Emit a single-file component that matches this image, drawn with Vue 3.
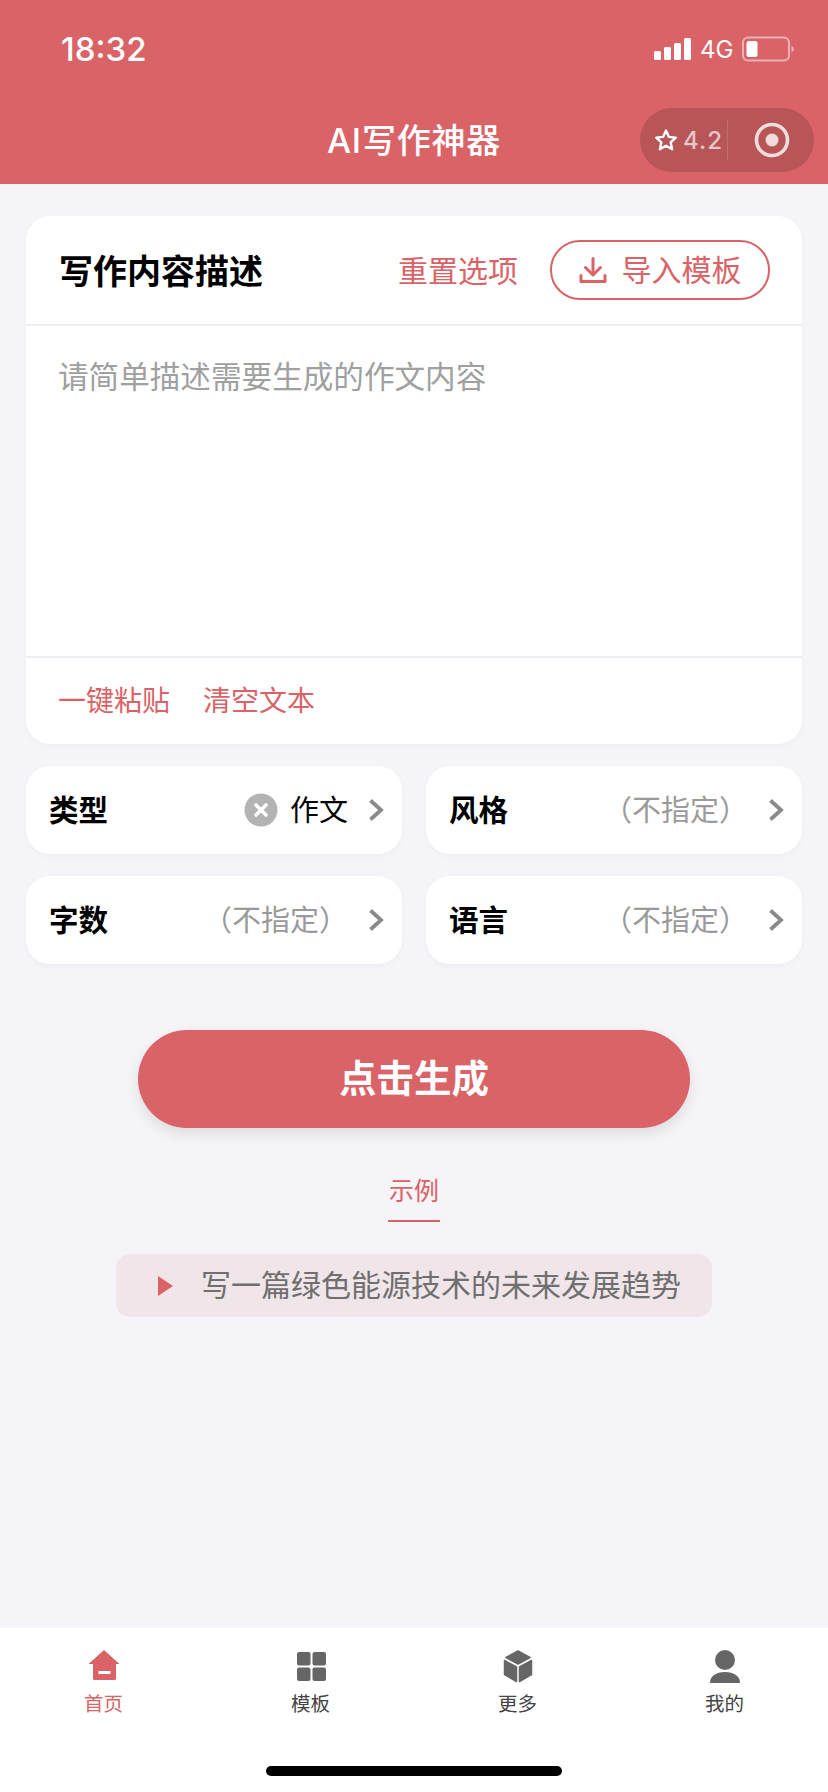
<template>
  <div class="page">
    <!-- Status bar and nav -->
    <header class="top">
      <div class="status">
        <span class="time">18:32</span>
        <div class="status-right">
          <svg class="signal" width="37" height="24" viewBox="0 0 37 24">
            <rect x="0" y="14" width="7" height="9" rx="1.5" />
            <rect x="10" y="10" width="7" height="13" rx="1.5" />
            <rect x="20" y="6" width="7" height="17" rx="1.5" />
            <rect x="30" y="1" width="7" height="22" rx="1.5" />
          </svg>
          <span class="net">4G</span>
          <svg class="battery" width="52" height="26" viewBox="0 0 52 26">
            <rect x="1" y="1.5" width="46" height="23" rx="5" class="battery-shell" />
            <rect x="4.5" y="5" width="11" height="16" rx="2.5" class="battery-level" />
            <path d="M49.5 9.5 Q52 11 52 13 Q52 15 49.5 16.5 Z" class="battery-nub" />
          </svg>
        </div>
      </div>
      <div class="nav">
        <h1 class="nav-title">AI写作神器</h1>
        <div class="capsule">
          <div class="capsule-left">
            <svg width="24" height="24" viewBox="0 0 24 24">
              <path d="M12 2.5 L14.9 8.9 L21.8 9.7 L16.7 14.4 L18.1 21.3 L12 17.8 L5.9 21.3 L7.3 14.4 L2.2 9.7 L9.1 8.9 Z" fill="none" stroke="#fff" stroke-width="2.4" stroke-linejoin="round" />
            </svg>
            <span class="score">4.2</span>
          </div>
          <div class="capsule-line"></div>
          <div class="capsule-right">
            <svg width="36" height="36" viewBox="0 0 36 36">
              <circle cx="18" cy="18" r="15.5" fill="none" stroke="#efdcdd" stroke-width="3.6" />
              <circle cx="18" cy="18" r="6.5" fill="#efdcdd" />
            </svg>
          </div>
        </div>
      </div>
    </header>

    <main class="main">
      <!-- Description card -->
      <section class="card">
        <div class="card-head">
          <h2 class="card-title">写作内容描述</h2>
          <span class="reset">重置选项</span>
          <button class="import-btn">
            <svg width="28" height="28" viewBox="0 0 28 28" fill="none" stroke="#d96367" stroke-width="3" stroke-linecap="round" stroke-linejoin="round">
              <path d="M14 2.5 V18.5" />
              <path d="M6.5 11.5 L14 19 L21.5 11.5" />
              <path d="M2 19.5 V25.5 H26 V19.5" />
            </svg>
            <span class="import-text">导入模板</span>
          </button>
        </div>
        <textarea class="desc-input" placeholder="请简单描述需要生成的作文内容" v-model="desc"></textarea>
        <div class="card-foot">
          <span>一键粘贴</span>
          <span>清空文本</span>
        </div>
      </section>

      <!-- Option tiles -->
      <div class="options">
        <div class="option" v-for="opt in options" :key="opt.label">
          <span class="option-label">{{ opt.label }}</span>
          <div class="option-value">
            <svg v-if="opt.value" class="clear" width="34" height="34" viewBox="0 0 34 34">
              <circle cx="17" cy="17" r="16.5" fill="#b3b3b3" />
              <path d="M12 12 L22 22 M22 12 L12 22" stroke="#fff" stroke-width="3.6" stroke-linecap="round" />
            </svg>
            <span v-if="opt.value" class="value-text">{{ opt.value }}</span>
            <span v-else class="value-empty">（不指定）</span>
          </div>
          <svg class="chevron" width="16" height="24" viewBox="0 0 16 24">
            <path d="M2.5 2.5 L13 12 L2.5 21.5" fill="none" stroke="#8a8a8a" stroke-width="3.8" />
          </svg>
        </div>
      </div>

      <button class="generate"><span>点击生成</span></button>

      <div class="example-tab">
        <span>示例</span>
      </div>

      <div class="example-chip">
        <svg width="15" height="22" viewBox="0 0 15 22">
          <path d="M0 1 L15 11 L0 21 Z" fill="#d96367" />
        </svg>
        <span class="chip-text">写一篇绿色能源技术的未来发展趋势</span>
      </div>
    </main>

    <!-- Bottom tabs -->
    <footer class="tabs">
      <div class="tab-row">
        <div class="tab active">
          <svg width="34" height="34" viewBox="0 0 34 34">
            <path d="M17 1 L32.5 15 H29 V29.5 Q29 31 27.5 31 H7.5 Q6 31 6 29.5 V15 H1.5 Z" fill="#d96367" />
            <rect x="11.5" y="22" width="12" height="3" fill="#fff" />
          </svg>
          <span>首页</span>
        </div>
        <div class="tab">
          <svg width="34" height="34" viewBox="0 0 34 34" fill="#666">
            <rect x="3" y="3" width="13.5" height="13.5" rx="2" />
            <rect x="18.5" y="3" width="13.5" height="13.5" rx="2" />
            <rect x="3" y="18.5" width="13.5" height="13.5" rx="2" />
            <rect x="18.5" y="18.5" width="13.5" height="13.5" rx="2" />
          </svg>
          <span>模板</span>
        </div>
        <div class="tab">
          <svg width="34" height="34" viewBox="0 0 34 34" fill="#666" stroke="#666" stroke-width="1.5" stroke-linejoin="round">
            <path d="M17 2 L29 8.5 L17 15 L5 8.5 Z" />
            <path d="M3.5 11.5 L15.5 18 V32.5 L3.5 25.5 Z" />
            <path d="M30.5 11.5 L18.5 18 V32.5 L30.5 25.5 Z" />
          </svg>
          <span>更多</span>
        </div>
        <div class="tab">
          <svg width="34" height="34" viewBox="0 0 34 34" fill="#666">
            <circle cx="17" cy="11" r="10" />
            <path d="M2 34 C2 27 8 23 17 23 C26 23 32 27 32 34 Z" />
          </svg>
          <span>我的</span>
        </div>
      </div>
      <div class="home-bar"></div>
    </footer>
  </div>
</template>

<script setup>
import { ref } from 'vue'

const desc = ref('')

const options = [
  { label: '类型', value: '作文' },
  { label: '风格', value: '' },
  { label: '字数', value: '' },
  { label: '语言', value: '' }
]
</script>

<style>
body {
  background: #f4f4f9;
}
</style>

<style scoped>
.page {
  width: 828px;
  height: 1792px;
  display: flex;
  flex-direction: column;
  background: #f4f4f9;
  font-family: Inter, "Noto Sans CJK SC", sans-serif;
  overflow: hidden;
}

.top {
  background: #d96367;
  color: #fff;
}

.status {
  height: 98px;
  display: flex;
  align-items: center;
  justify-content: space-between;
  padding: 0 34px 0 61px;
}

.time {
  font-size: 33px;
  font-weight: 500;
}

.status-right {
  display: flex;
  align-items: center;
}

.signal {
  fill: #fff;
  margin-right: 9px;
}

.net {
  font-size: 24px;
  width: 42px;
}

.battery-shell {
  fill: none;
  stroke: rgba(255, 255, 255, 0.5);
  stroke-width: 2;
}

.battery-level {
  fill: #fff;
}

.battery-nub {
  fill: rgba(255, 255, 255, 0.5);
}

.nav {
  height: 86px;
  position: relative;
  display: flex;
  align-items: center;
  justify-content: center;
}

.nav-title {
  margin: 0 0 6px;
  font-size: 34px;
  font-weight: 500;
  letter-spacing: 0.8px;
}

.capsule {
  position: absolute;
  top: 10px;
  right: 14px;
  width: 174px;
  height: 64px;
  border-radius: 32px;
  background: #b75557;
  display: flex;
  align-items: center;
}

.capsule-left {
  width: 87px;
  padding-left: 14px;
  box-sizing: border-box;
  display: flex;
  align-items: center;
  gap: 5px;
}

.score {
  font-size: 24px;
  font-weight: 500;
  letter-spacing: 1px;
  color: #e6c6c7;
}

.capsule-line {
  width: 1px;
  height: 40px;
  background: rgba(255, 255, 255, 0.14);
}

.capsule-right {
  flex: 1;
  display: flex;
  justify-content: center;
  padding-left: 2px;
}

.main {
  flex: 1;
  padding: 32px 26px 0;
  display: flex;
  flex-direction: column;
  align-items: center;
}

.card {
  width: 100%;
  background: #fff;
  border-radius: 24px;
  box-shadow: 0 2px 6px rgba(0, 0, 0, 0.03);
  display: flex;
  flex-direction: column;
}

.card-head {
  height: 108px;
  padding: 0 32px 0 33px;
  display: flex;
  align-items: center;
  border-bottom: 2px solid #eeedf3;
}

.card-title {
  margin: 0 auto 2px 0;
  font-size: 34px;
  font-weight: 700;
  color: #000;
}

.reset {
  margin-bottom: 2px;
  font-size: 30px;
  color: #d96367;
}

.import-btn {
  margin-left: 32px;
  width: 220px;
  height: 60px;
  border: 2px solid #d96367;
  border-radius: 30px;
  background: #fff;
  padding: 0;
  display: flex;
  align-items: center;
  justify-content: center;
  gap: 15px;
  font-family: inherit;
  font-size: 30px;
  color: #d96367;
}

.import-text {
  margin-bottom: 4px;
}

.desc-input {
  display: block;
  height: 330px;
  box-sizing: border-box;
  border: 0;
  outline: 0;
  resize: none;
  padding: 29px 32px;
  font-family: inherit;
  font-size: 30.6px;
  line-height: 44px;
  background: transparent;
}

.desc-input::placeholder {
  color: #a0a0a0;
}

.card-foot {
  height: 88px;
  box-sizing: border-box;
  padding: 0 32px 4px;
  display: flex;
  align-items: center;
  gap: 33px;
  border-top: 2px solid #eeedf3;
  font-size: 28px;
  color: #d96367;
}

.options {
  width: 100%;
  margin-top: 22px;
  display: grid;
  grid-template-columns: 1fr 1fr;
  gap: 22px 24px;
}

.option {
  height: 88px;
  padding: 0 18px 0 23px;
  background: #fff;
  border-radius: 24px;
  box-shadow: 0 2px 6px rgba(0, 0, 0, 0.03);
  display: flex;
  align-items: center;
  font-size: 29.5px;
}

.option-label {
  margin-bottom: 4px;
  font-weight: 700;
  color: #000;
}

.option-value {
  margin-left: auto;
  display: flex;
  align-items: center;
  font-size: 29px;
}

.clear {
  margin-right: 12px;
}

.value-text,
.value-empty {
  margin-bottom: 4px;
}

.value-text {
  color: #000;
}

.value-empty {
  color: #9a9a9a;
}

.chevron {
  margin-left: 20px;
}

.generate {
  margin-top: 66px;
  width: 552px;
  height: 98px;
  border: 0;
  border-radius: 49px;
  background: #d96367;
  color: #fff;
  font-family: inherit;
  font-size: 37.5px;
  font-weight: 700;
  box-shadow: 0 6px 14px rgba(0, 0, 0, 0.1);
  padding: 0 0 8px;
}

.example-tab {
  margin-top: 45px;
  width: 52px;
  padding-bottom: 11px;
  border-bottom: 2px solid #d96367;
  text-align: center;
  font-size: 25px;
  line-height: 36px;
  color: #d96367;
  white-space: nowrap;
}

.example-chip {
  margin-top: 32px;
  width: 596px;
  height: 63px;
  box-sizing: border-box;
  padding-left: 42px;
  background: #f0e6e9;
  border-radius: 14px;
  display: flex;
  align-items: center;
  gap: 28px;
  font-size: 30px;
  color: #6f6f6f;
}

.chip-text {
  margin-bottom: 5px;
}

.tabs {
  height: 164px;
  background: #fff;
  display: flex;
  flex-direction: column;
  align-items: center;
}

.tab-row {
  width: 100%;
  padding-top: 21px;
  display: grid;
  grid-template-columns: repeat(4, 1fr);
}

.tab {
  display: flex;
  flex-direction: column;
  align-items: center;
  font-size: 19.5px;
  line-height: 28px;
  color: #444;
}

.tab span {
  margin-top: 7px;
}

.tab.active span {
  color: #d96367;
}

.home-bar {
  margin-top: 48px;
  width: 296px;
  height: 10px;
  border-radius: 5px;
  background: #000;
}
</style>
